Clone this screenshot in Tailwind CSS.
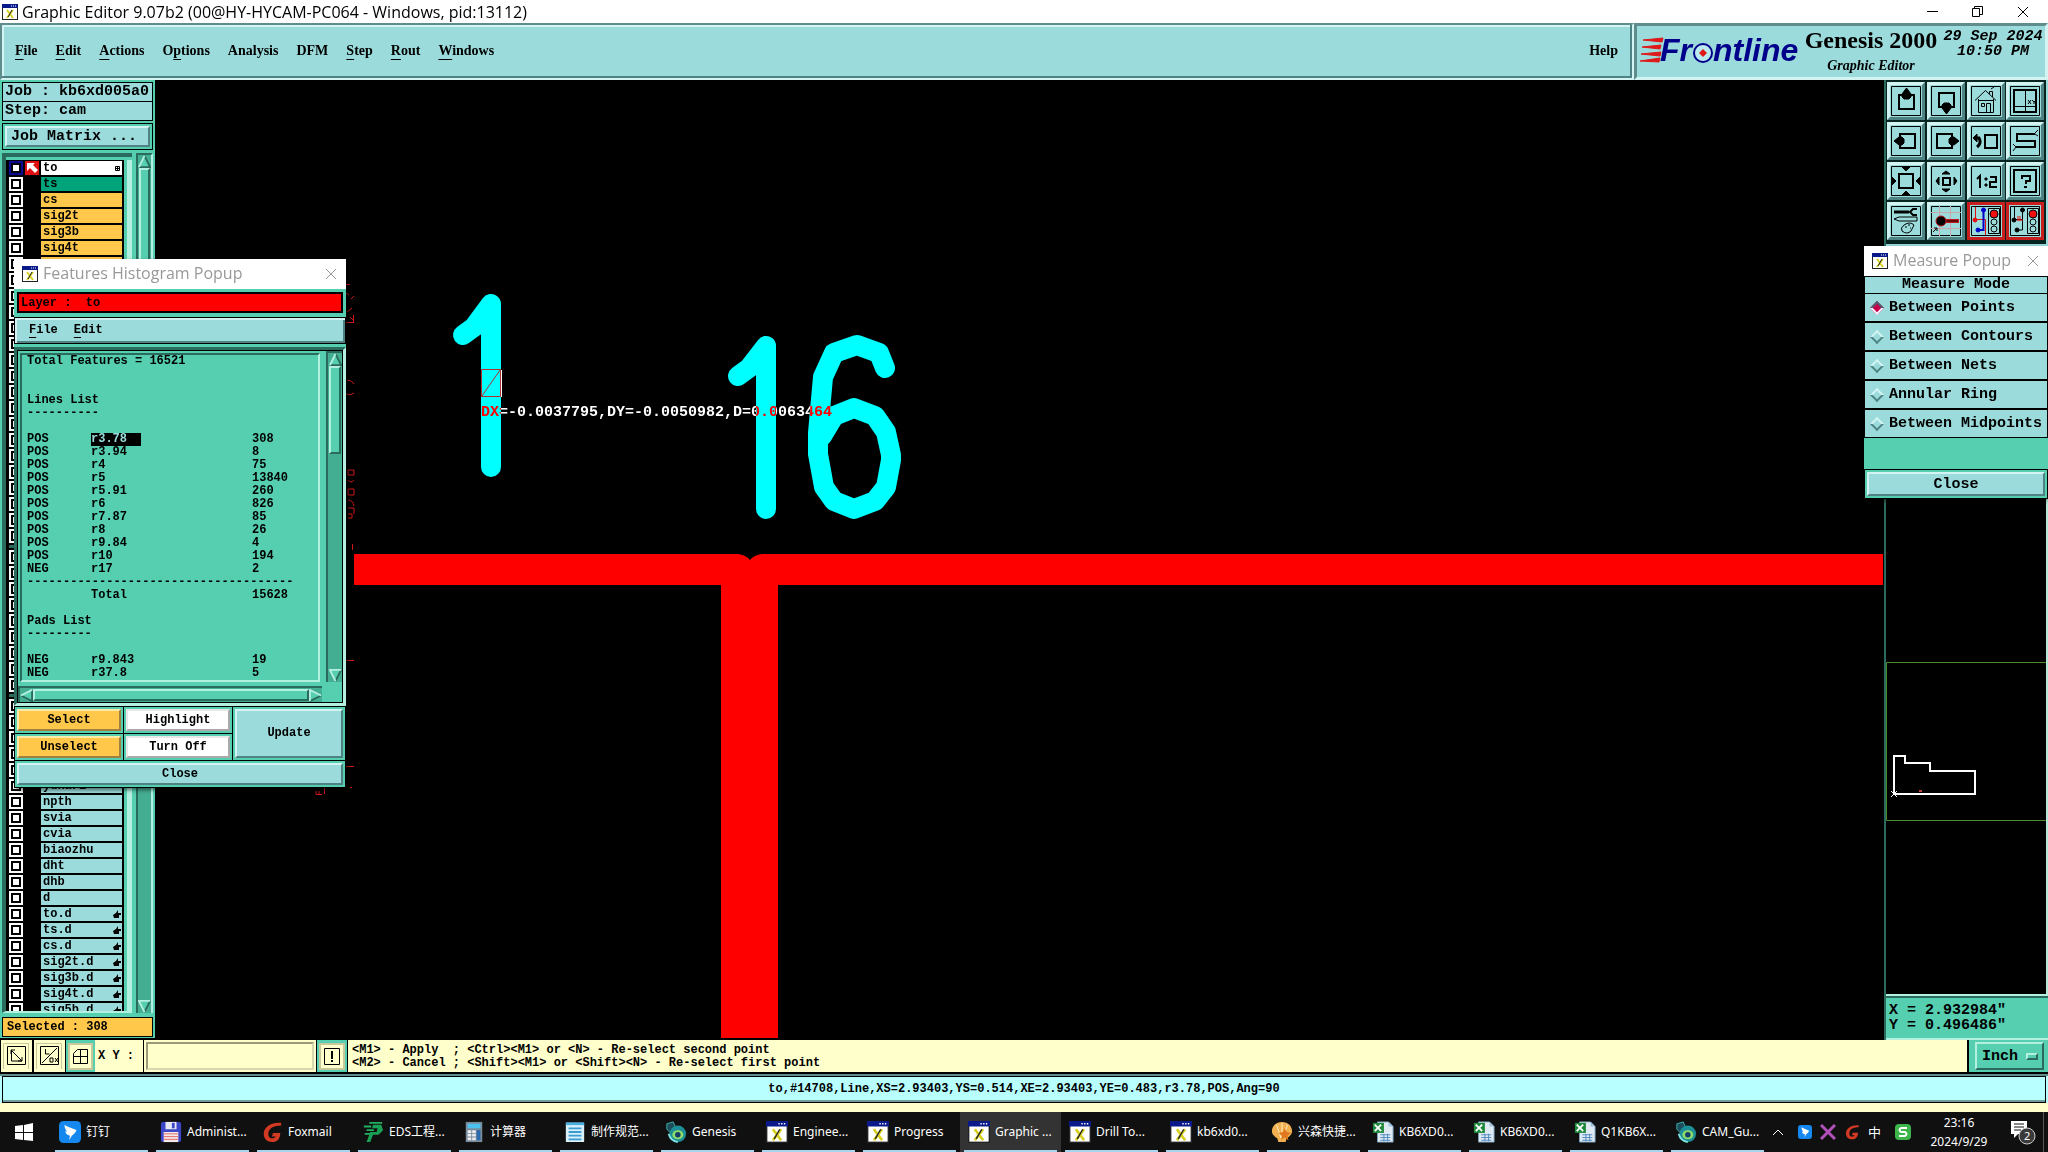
<!DOCTYPE html>
<html lang="en">
<head>
    <meta charset="UTF-8">
    <meta name="viewport" content="width=device-width, initial-scale=1.0">
    <title>Graphic Editor 9.07b2</title>
    <script src="https://cdn.jsdelivr.net/npm/@tailwindcss/browser@4"></script>
</head>
<body class="relative h-screen overflow-hidden flex flex-col bg-black text-black font-bold text-[15px] leading-[15px] font-['Liberation_Mono',monospace]">

    <!-- shared icons -->
    <svg class="hidden">
        <symbol id="i-xwin" viewBox="0 0 16 16">
            <rect x="0.5" y="0.5" width="15" height="15" fill="#fff" stroke="#222" />
            <rect width="16" height="4" fill="#0a1a8a" />
            <path d="M9 2h1M11 2h1M13 2h1" stroke="#fff" />
            <path d="M5 6l6 8M11 6l-6 8" stroke="#d8d020" stroke-width="2" />
            <path d="M10 6l-4 7" stroke="#222" />
        </symbol>
        <symbol id="i-close" viewBox="0 0 12 12"><path d="M1 1l10 10M11 1L1 11" stroke="currentColor" fill="none" /></symbol>
        <symbol id="i-up" viewBox="0 0 14 14"><path d="M7 1L13 13H1z" fill="#55cfb0" /><path d="M7 1l6 12H1" fill="none" stroke="#2b6b5e" stroke-width="2" /><path d="M1 13L7 1" stroke="#b4f0e0" stroke-width="2" /></symbol>
        <symbol id="i-down" viewBox="0 0 14 14"><path d="M1 1h12L7 13z" fill="#55cfb0" /><path d="M13 1L7 13" stroke="#2b6b5e" stroke-width="2" /><path d="M13 1H1l6 12" fill="none" stroke="#b4f0e0" stroke-width="2" /></symbol>
        <symbol id="i-left" viewBox="0 0 14 14"><path d="M13 1v12L1 7z" fill="#55cfb0" /><path d="M13 1v12L1 7" fill="none" stroke="#2b6b5e" stroke-width="2" /><path d="M13 1L1 7" stroke="#b4f0e0" stroke-width="2" /></symbol>
        <symbol id="i-right" viewBox="0 0 14 14"><path d="M1 1v12l12-6z" fill="#55cfb0" /><path d="M1 13l12-6" stroke="#2b6b5e" stroke-width="2" /><path d="M1 13V1l12 6" fill="none" stroke="#b4f0e0" stroke-width="2" /></symbol>
        <symbol id="i-excel" viewBox="0 0 24 24">
            <path d="M6 1h12l5 5v17H6z" fill="#dfeaf2" stroke="#7aa0bd" /><path d="M18 1v5h5" fill="#9fc3dd" />
            <rect x="1" y="2" width="12" height="11" fill="#1f8a3c" /><path d="M3 4l7 7M10 4l-7 7" stroke="#fff" stroke-width="2" />
            <path d="M9 15h11M9 18h11M9 21h11M13 14v8M17 14v8" stroke="#4a86c0" />
        </symbol>
        <symbol id="i-genesis" viewBox="0 0 24 24">
            <path d="M2 3l7-2 3 7-6 5-4-4z" fill="#1d4d5a" stroke="#3fb5b0" />
            <ellipse cx="14" cy="14" rx="9" ry="9" fill="#1d8f96" /><ellipse cx="14" cy="15" rx="6" ry="5" fill="#8fdc6a" /><circle cx="14" cy="15" r="3" fill="#14406b" />
            <path d="M4 14q2 8 10 9" stroke="#7fe3e0" fill="none" stroke-width="2" />
        </symbol>
        <symbol id="i-fox" viewBox="0 0 24 24"><path d="M22 2C12 1 3 6 3 14c0 6 4 9 9 9 6 0 9-4 9-10h-8l-1 4h4c-1 2-3 2-4 2-3 0-4-2-4-5 0-6 6-9 14-9z" fill="#d33a24" /></symbol>
        <symbol id="i-bird" viewBox="0 0 24 24"><rect width="24" height="24" rx="5" fill="#1588f0" /><path d="M6 4c4 3 10 4 13 6-1 3-4 5-5 6l-3 5 1-5c-4-1-5-3-5-5l2 1C7 9 6 7 6 4z" fill="#fff" /></symbol>
    </svg>

    <!-- window title -->
    <header class="h-[23px] shrink-0 bg-white flex items-center pl-[2px] pr-[19px] font-normal font-['Open_Sans','Noto_Sans',sans-serif]">
        <svg class="size-4"><use href="#i-xwin" /></svg>
        <h1 class="ml-1 text-[16px] leading-[20px]">Graphic Editor 9.07b2 (00@HY-HYCAM-PC064 - Windows, pid:13112)</h1>
        <div class="ml-auto flex items-center gap-[34px]">
            <button aria-label="Minimize"><svg class="w-[11px] h-[11px]" stroke="#000"><path d="M0 5.5h11" /></svg></button>
            <button aria-label="Restore"><svg class="w-[11px] h-[11px]" stroke="#000" fill="none"><path d="M0.5 2.5h7v8h-7zM2.5 2.5v-2h8v8h-3" /></svg></button>
            <button aria-label="Close"><svg class="w-3 h-3"><use href="#i-close" /></svg></button>
        </div>
    </header>

    <!-- menu bar -->
    <div class="h-[57px] shrink-0 flex bg-[#9bdbdb]">
        <nav class="flex-1 flex items-center gap-[18px] pl-[13px] pr-[14px] pb-[2px] border-2 border-t-[#5f8c8c] border-l-[#5f8c8c] border-b-[#d4f4f4] border-r-[#d4f4f4] shadow-[inset_-2px_-2px_0_#4f8383,inset_2px_2px_0_#d4f4f4] text-[14px] leading-4 font-['Liberation_Serif',serif]">
            <a href="#"><u class="underline-offset-4">F</u>ile</a>
            <a href="#"><u class="underline-offset-4">E</u>dit</a>
            <a href="#"><u class="underline-offset-4">A</u>ctions</a>
            <a href="#">O<u class="underline-offset-4">p</u>tions</a>
            <a href="#">Analysis</a>
            <a href="#">DFM</a>
            <a href="#"><u class="underline-offset-4">S</u>tep</a>
            <a href="#"><u class="underline-offset-4">R</u>out</a>
            <a href="#"><u class="underline-offset-4">W</u>indows</a>
            <a href="#" class="ml-auto">Help</a>
        </nav>
        <div class="w-[414px] flex border-[3px] border-t-[#5f8c8c] border-l-[#5f8c8c] border-b-[#d4f4f4] border-r-[#d4f4f4]">
            <svg class="w-[164px] h-[50px]" role="img" aria-label="Frontline">
                <path d="M6 14l20-2-1 4zM5 21l19-2-1 4zM4 28l20-2-1 4zM3 35l20-3-1 4z" fill="#e01818" stroke="#e01818" />
                <g fill="#00008a" font-family="Liberation Sans" font-size="32" font-weight="bold" font-style="italic">
                    <text x="23" y="35">Fr</text>
                    <text x="76" y="35">ntline</text>
                </g>
                <circle cx="66" cy="27" r="9" fill="#b9eaf0" stroke="#00008a" stroke-width="2" />
                <path d="M66 23l4 4-4 4-4-4z" fill="#e01818" />
            </svg>
            <div class="w-[140px] text-center font-['Liberation_Serif',serif]">
                <div class="text-[24px] leading-7 whitespace-nowrap">Genesis 2000</div>
                <div class="text-[14px] leading-6 italic">Graphic Editor</div>
            </div>
            <div class="flex-1 pt-[3px] text-center italic whitespace-nowrap">29 Sep 2024<br>10:50 PM</div>
        </div>
    </div>

    <main class="flex-1 min-h-0 flex">
        <!-- layers -->
        <aside class="w-[155px] shrink-0 flex flex-col bg-[#55cfb0] pt-[2px] px-[2px] pb-[1px] border-b-2 border-black">
            <div class="h-5 border border-black bg-[#9bdbdb] px-[2px] leading-[18px] whitespace-nowrap">Job : kb6xd005a0</div>
            <div class="h-[19px] border border-black border-t-0 bg-[#9bdbdb] px-[2px] leading-[18px]">Step: cam</div>
            <div class="mt-[2px] p-[2px] border border-black">
                <button class="block w-full h-[21px] text-left px-1 leading-4 bg-[#9bdbdb] border-2 border-t-[#d4f4f4] border-l-[#d4f4f4] border-b-[#4f8383] border-r-[#4f8383]">Job Matrix ...</button>
            </div>
            <div class="mt-[3px] flex-1 min-h-0 flex">
                <div class="flex-1 min-w-0 flex border-t-4 border-l-4 border-t-[#2b6b5e] border-l-[#2b6b5e] border-b-2 border-b-[#b4f0e0] pt-[3px]">
                    <ul id="layers" class="w-[118px] h-full overflow-hidden bg-black text-[12px] leading-[14px] pl-[3px]"></ul>
                    <div class="flex-1 border-r-[5px] border-[#b4f0e0]"></div>
                </div>
                <div class="w-[17px] ml-1 flex flex-col items-center bg-[#44ae92] border-l-2 border-t-2 border-r-2 border-l-[#2b6b5e] border-t-[#2b6b5e] border-r-[#b4f0e0]">
                    <svg class="size-[13px] shrink-0"><use href="#i-up" /></svg>
                    <div class="w-[11px] h-1/2 bg-[#55cfb0] border-2 border-t-[#b4f0e0] border-l-[#b4f0e0] border-b-[#2b6b5e] border-r-[#2b6b5e]"></div>
                    <svg class="size-[13px] shrink-0 mt-auto"><use href="#i-down" /></svg>
                </div>
            </div>
            <div class="mt-1 h-5 border border-black bg-[#ffc84b] px-1 text-[12px] leading-[18px]">Selected : 308</div>
        </aside>

        <!-- drawing area, drawn in window coordinates -->
        <div class="flex-1 min-w-0 overflow-hidden">
            <svg class="w-full h-full">
                <g transform="translate(-155 -80)">
                    <path d="M354 554H738Q746 555 750 560Q754 555 762 554H1883V585H778V1038H721V585H354z" fill="#f00" />
                    <g fill="none" stroke="#0ff" stroke-width="20" stroke-linecap="round" stroke-linejoin="round">
                        <path d="M463 335L474 327L491 304V467" />
                        <path d="M738 376L749 368L766 346V509" />
                        <path d="M885 368L879 353L857 345L834 353L823 377L818 433V454L824 487L834 501L854 509L875 501L886 487L891 460V455L886 432L875 416L854 408L834 416L822 436" />
                    </g>
                    <path d="M481.500 369.500h19v27h-19zM481.500 396.500l19-27" fill="none" stroke="#b03030" />
                    <path d="M501.500 370v27" stroke="#fff" />
                    <text class="mix-blend-difference" x="481" y="416" fill="#fff" font-family="Liberation Mono" font-size="15" font-weight="bold">DX=-0.0037795,DY=-0.0050982,D=0.0063464</text>
                    <g stroke="#d01818" fill="none">
                        <path d="M346 284.500h4M346 293l3 2M351 299l3-3M347 312l5-4M346 322.500h8M353.500 315v7M350 317l3 3M347 380q5 0 7 4M346 394q4 2 8-1M348 470h6v5h-6zM348 480q3 4 6 0M348 489h6v6h-6zM348 500q5 0 6 6M348 508h6v6M348 514h4v4h-4M352.500 544v6M346 660.500h8M346 766.500h8M330 787.500h4M338 787.500h3M350 787.500h2M324.500 786v8M316 794.500h6M316 791v3M319 791v3" />
                    </g>
                </g>
            </svg>
        </div>

        <!-- tools and overview -->
        <aside class="w-[164px] shrink-0 flex flex-col border-l-2 border-[#2b6b5e]">
            <div id="tools" class="grid grid-cols-4 gap-[2px] pt-[2px] pl-[1px] pr-[2px] pb-1 border-b-2 border-b-[#9bdbdb] border-r-2 border-r-[#9bdbdb] bg-[#062420]">
            </div>
            <div class="flex-1 border-r-2 border-[#b4e8d8]">
                <svg class="w-full h-full">
                    <g transform="translate(-1886 -246)" fill="none">
                        <path d="M2046 662.500H1886.500V820.500H2046" stroke="#4c8a2c" />
                        <path d="M1894 794V756H1905V763H1930V771H1975V794z" stroke="#fff" stroke-width="2" />
                        <path d="M1891 791l6 6M1897 791l-6 6" stroke="#fff" />
                        <path d="M1919 790h3v2h-3z" fill="#c04040" />
                    </g>
                </svg>
            </div>
            <div class="h-[46px] border-y-2 border-y-[#b4f0e0] bg-[#55cfb0]">
                <div class="h-full border-t-2 border-t-[#2b6b5e] pt-[5px] pl-[3px] whitespace-pre">X = 2.932984"
Y = 0.496486"</div>
            </div>
        </aside>
    </main>

    <!-- command bar -->
    <div class="h-[34px] shrink-0 flex border-b-2 border-black bg-black text-[12px]">
        <button aria-label="Snap" class="w-[31px] ml-[1px] mr-[2px] p-[2px] bg-[#ffffcc]"><svg class="size-[26px]" fill="none" stroke="#000"><path d="M0.500 0.500h25v26h-25z" stroke="#c8c89a" /><path d="M4.500 3.500h18v18h-18zM8.500 8v10H19M8 7l11 11M8 11V7h4M19 14v4h-4" /></svg></button>
        <button aria-label="Angle" class="w-[31px] mr-[1px] p-[2px] bg-[#ffffcc]"><svg class="size-[26px]" fill="none" stroke="#000"><path d="M0.500 0.500h25v26h-25z" stroke="#c8c89a" /><path d="M4.500 3.500h18v18h-18zM6 20L21 5M9.500 6v5h4M14 15h3v4h-3zM19 15l3 4M22 15l-3 4" /></svg></button>
        <button aria-label="Grid" class="w-[29px] p-[2px] bg-[#55cfb0]"><svg class="w-[25px] h-[27px] bg-[#ffffcc]" fill="none" stroke="#000"><path d="M1 1h23v25H1z" stroke="#c8c89a" stroke-width="2" /><path d="M9.500 6.500h10v14h-14v-10zM12.500 6v14M5 13.500h15" /></svg></button>
        <div class="flex-1 flex bg-[#ffffcc]">
            <label for="xy" class="w-[48px] pl-[3px] leading-[32px] whitespace-nowrap">X Y :</label>
            <div class="w-[174px] p-[2px] border-x border-black">
                <input id="xy" type="text" class="block w-full h-[28px] bg-[#ffffcc] border-2 border-t-[#9a9a78] border-l-[#9a9a78] border-b-[#d8d8b0] border-r-[#d8d8b0] px-1 outline-none" value="">
            </div>
            <button aria-label="Alert" class="w-[31px] p-[2px] bg-[#55cfb0] border-r border-black"><svg class="w-[26px] h-[27px] bg-[#ffffcc]" fill="none" stroke="#000"><path d="M1 1h24v25H1z" stroke="#c8c89a" stroke-width="2" /><path d="M5.500 5.500h15v16h-15z" /><path d="M13 8v8M13 17v2" stroke-width="2" /></svg></button>
            <div class="pl-1 leading-[13px] pt-1 whitespace-pre">&lt;M1> - Apply  ; &lt;Ctrl>&lt;M1> or &lt;N> - Re-select second point
&lt;M2> - Cancel ; &lt;Shift>&lt;M1> or &lt;Shift>&lt;N> - Re-select first point</div>
        </div>
        <div class="w-[79px] ml-[2px] py-[2px] pl-[6px] pr-1 bg-[#55cfb0]">
            <button class="w-full h-[28px] pl-[5px] flex items-center gap-2 text-[15px] border-2 border-t-[#b4f0e0] border-l-[#b4f0e0] border-b-[#2b6b5e] border-r-[#2b6b5e]">Inch
                <span class="w-3 h-[7px] border-2 border-t-[#b4f0e0] border-l-[#b4f0e0] border-b-[#2b6b5e] border-r-[#2b6b5e]"></span>
            </button>
        </div>
    </div>

    <!-- status line -->
    <div class="h-[29px] shrink-0 border-t-2 border-t-[#5f8c8c] bg-[#b8ffff] px-[2px]">
        <div class="h-[27px] border border-black text-center text-[12px] leading-[25px] shadow-[inset_0_-2px_0_#6f9c9c]">to,#14708,Line,XS=2.93403,YS=0.514,XE=2.93403,YE=0.483,r3.78,POS,Ang=90</div>
    </div>
    <div class="h-[9px] shrink-0 bg-[#ffffcc]"></div>

    <!-- taskbar -->
    <footer class="h-10 shrink-0 flex items-stretch bg-[#101010] text-white font-normal text-[12px] leading-4 font-['Noto_Sans','Noto_Sans_CJK_SC',sans-serif] whitespace-nowrap">
        <button aria-label="Start" class="w-[55px] pl-[15px]"><svg class="w-[18px] h-[18px]" fill="#fff"><path d="M0 3l8-1v7H0zM9 2l9-2v9H9zM0 10h8v7l-8-1zM9 10h9v8l-9-1z" /></svg></button>
        <div id="tasks" class="flex gap-2"></div>
        <div class="ml-auto flex items-center">
            <svg class="w-3 h-3 mr-[14px]" fill="none" stroke="#fff"><path d="M1 9l5-5 5 5" /></svg>
            <svg class="size-[14px] mr-2"><use href="#i-bird" /></svg>
            <svg class="size-4 mr-2"><path d="M1 1l14 14M15 1L1 15" stroke="#b050b8" stroke-width="3" /></svg>
            <svg class="size-4 mr-2"><use href="#i-fox" /></svg>
            <span class="w-[26px] text-[13px]">中</span>
            <svg class="size-[18px]"><rect x="1" y="1" width="16" height="16" rx="4" fill="#3db54a" /><path d="M13 5H7q-3 2 0 4h4q3 2 0 4H5" stroke="#fff" stroke-width="2" fill="none" /></svg>
            <div class="w-[94px] text-center leading-[19px]">23:16<br>2024/9/29</div>
            <svg class="w-[26px] h-[28px] ml-1 mr-[7px]"><path d="M1 3h16v13H8l-4 4v-4H1z" fill="#fff" /><path d="M4 6h10M4 9h10M4 12h7" stroke="#101010" /><circle cx="17" cy="18" r="8" fill="#3a3a3a" stroke="#ccc" /><text x="14" y="22" fill="#fff" font-size="11">2</text></svg>
            <div class="w-[5px] h-full border-l border-[#555]"></div>
        </div>
    </footer>

    <!-- features histogram -->
    <section class="absolute left-[14px] top-[259px] w-[332px] bg-[#55cfb0] text-[12px] leading-[13px] shadow-[2px_2px_4px_#0008]">
        <header class="h-[30px] bg-white flex items-center pl-2 pr-[9px] text-[#999] font-normal font-['Open_Sans','Noto_Sans',sans-serif]">
            <svg class="size-4"><use href="#i-xwin" /></svg>
            <h2 class="ml-[5px] text-[16px] leading-5 pb-[2px]">Features Histogram Popup</h2>
            <button aria-label="Close popup" class="ml-auto"><svg class="size-3"><use href="#i-close" /></svg></button>
        </header>
        <div class="mx-[3px] mt-[3px] h-[21px] border-2 border-black bg-[#f00] px-[2px] leading-[18px] whitespace-pre">Layer :  to</div>
        <nav class="mt-1 h-[27px] flex items-center gap-4 px-[14px] bg-[#9bdbdb] border border-black shadow-[inset_2px_2px_0_#d4f4f4,inset_-2px_-2px_0_#4f8383]">
            <a href="#"><u class="underline-offset-4">F</u>ile</a>
            <a href="#"><u class="underline-offset-4">E</u>dit</a>
        </nav>
        <div class="mt-[3px] h-[359px] border-[3px] border-t-[#2b6b5e] border-l-[#2b6b5e] border-b-[#b4f0e0] border-r-[#b4f0e0]">
            <div class="h-full border border-black grid grid-cols-[1fr_16px] grid-rows-[1fr_16px] gap-x-1 gap-y-1">
                <div class="m-[2px] mb-0 border-2 border-t-[#2b6b5e] border-l-[#2b6b5e] border-b-[#b4f0e0] border-r-[#b4f0e0] pl-[5px] overflow-hidden whitespace-pre">Total Features = 16521


Lines List
----------

<table id="lines" class="border-collapse"></table>-------------------------------------
<table id="total" class="border-collapse"></table>
Pads List
---------

<table id="pads" class="border-collapse"></table></div>
                <div class="flex flex-col items-center bg-[#44ae92] border-t-2 border-l-2 border-[#2b6b5e]">
                    <svg class="size-[13px] shrink-0"><use href="#i-up" /></svg>
                    <div class="w-3 h-[88px] bg-[#55cfb0] border-2 border-t-[#b4f0e0] border-l-[#b4f0e0] border-b-[#2b6b5e] border-r-[#2b6b5e]"></div>
                    <svg class="size-[13px] shrink-0 mt-auto"><use href="#i-down" /></svg>
                </div>
                <div class="flex items-center bg-[#44ae92] border-t-2 border-l-2 border-[#2b6b5e]">
                    <svg class="size-[13px] shrink-0"><use href="#i-left" /></svg>
                    <div class="flex-1 h-3 bg-[#55cfb0] border-2 border-t-[#b4f0e0] border-l-[#b4f0e0] border-b-[#2b6b5e] border-r-[#2b6b5e]"></div>
                    <svg class="size-[13px] shrink-0"><use href="#i-right" /></svg>
                </div>
            </div>
        </div>
        <div class="grid grid-cols-[108px_108px_1fr] gap-[1px] bg-black p-[1px]">
            <div class="p-[2px] bg-[#55cfb0]"><button class="block w-full h-[22px] bg-[#ffc84b] border-2 border-t-[#ffe9a8] border-l-[#ffe9a8] border-b-[#a08040] border-r-[#a08040]">Select</button></div>
            <div class="p-[2px] bg-[#55cfb0]"><button class="block w-full h-[22px] bg-white border-2 border-t-[#e8e8e8] border-l-[#e8e8e8] border-b-[#aaa] border-r-[#aaa]">Highlight</button></div>
            <div class="p-[2px] bg-[#55cfb0] row-span-2"><button class="block w-full h-full bg-[#9bdbdb] border-2 border-t-[#d4f4f4] border-l-[#d4f4f4] border-b-[#4f8383] border-r-[#4f8383]">Update</button></div>
            <div class="p-[2px] bg-[#55cfb0]"><button class="block w-full h-[22px] bg-[#ffc84b] border-2 border-t-[#ffe9a8] border-l-[#ffe9a8] border-b-[#a08040] border-r-[#a08040]">Unselect</button></div>
            <div class="p-[2px] bg-[#55cfb0]"><button class="block w-full h-[22px] bg-white border-2 border-t-[#e8e8e8] border-l-[#e8e8e8] border-b-[#aaa] border-r-[#aaa]">Turn Off</button></div>
            <div class="p-[2px] bg-[#55cfb0] col-span-3"><button class="block w-full h-[22px] bg-[#9bdbdb] border-2 border-t-[#d4f4f4] border-l-[#d4f4f4] border-b-[#4f8383] border-r-[#4f8383]">Close</button></div>
        </div>
    </section>

    <!-- measure popup -->
    <section class="absolute right-0 top-[246px] w-[184px] bg-[#55cfb0] shadow-[-1px_2px_4px_#0008]">
        <header class="h-[30px] bg-white flex items-center pl-2 pr-[9px] text-[#999] font-normal font-['Open_Sans','Noto_Sans',sans-serif]">
            <svg class="size-4"><use href="#i-xwin" /></svg>
            <h2 class="ml-[5px] text-[16px] leading-5 pb-[2px]">Measure Popup</h2>
            <button aria-label="Close popup" class="ml-auto"><svg class="size-3"><use href="#i-close" /></svg></button>
        </header>
        <fieldset class="bg-black px-[1px]">
            <div class="h-[16px] mt-[1px] bg-[#9bdbdb] text-center leading-4">Measure Mode</div>
            <div id="modes" class="flex flex-col gap-[2px] pt-[1px] pb-[1px]"></div>
        </fieldset>
        <div class="mt-[31px] border border-black p-[2px]">
            <button class="block w-full h-6 bg-[#9bdbdb] border-2 border-t-[#d4f4f4] border-l-[#d4f4f4] border-b-[#4f8383] border-r-[#4f8383]">Close</button>
        </div>
    </section>

    <script>
        const el = (id) => document.getElementById(id);

        // layer list in three blocks; unnamed slots only have a tick box
        const blank = (n) => Array(n).fill('');
        const groups = [
            ['to', 'ts', 'cs', 'sig2t', 'sig3b', 'sig4t', ...blank(18)],
            blank(9),
            [...blank(5), 'yukari', 'npth', 'svia', 'cvia', 'biaozhu', 'dht', 'dhb', 'd', 'to.d', 'ts.d', 'cs.d', 'sig2t.d', 'sig3b.d', 'sig4t.d', 'sig5b.d'],
        ];
        const hand = '<svg class="w-2 h-[14px] ml-auto mr-[1px]"><path d="M0 8l3-2 2-3v3h3v2H6v3H1z" /></svg>';
        const grid = '<svg class="w-[7px] h-[14px] ml-auto"><path d="M0.5 5.5h4v4h-4zM2.5 5v5M0 7.500h5" fill="none" stroke="#000" /></svg>';
        el('layers').innerHTML = groups.map((names, g) => names.map((name, i) => {
            const first = g === 0 && i === 0;
            const bg = first ? 'bg-white' : name === 'ts' ? 'bg-[#00a37a]' : g === 0 ? 'bg-[#ffc84b]' : 'bg-[#9bdbdb]';
            return `<li class="h-4 flex items-center">
                <span class="size-[14px] p-[2px] ${first ? 'bg-[#0a0a9a]' : 'bg-white'}"><span class="block size-[10px] bg-white border-2 border-black"></span></span>
                ${first ? '<svg class="w-[14px] h-[14px] ml-[2px] mr-[2px] bg-[#e01010]"><path d="M2 2h8L8 4l5 5-3 3-5-5-3 3z" fill="#fff" /></svg>' : '<span class="w-[18px]"></span>'}
                <span class="flex w-[81px] h-[14px] pl-[2px] ${bg}">${name}${first ? grid : name.endsWith('.d') ? hand : ''}</span>
            </li>`;
        }).join('')).join('<li class="h-[5px] bg-[#2b6b5e] border-y border-black"></li>');

        // histogram rows
        const row = ([a, b, c], sel) => `<tr><td class="w-[64px] p-0">${a}</td><td class="w-[161px] p-0">${sel ? `<span class="block w-[50px] h-[13px] bg-black text-[#9bdbdb]">${b}</span>` : b}</td><td class="p-0">${c}</td></tr>`;
        el('lines').innerHTML = [
            ['POS', 'r3.78', 308], ['POS', 'r3.94', 8], ['POS', 'r4', 75], ['POS', 'r5', 13840], ['POS', 'r5.91', 260], ['POS', 'r6', 826],
            ['POS', 'r7.87', 85], ['POS', 'r8', 26], ['POS', 'r9.84', 4], ['POS', 'r10', 194], ['NEG', 'r17', 2],
        ].map((r, i) => row(r, i === 0)).join('');
        el('total').innerHTML = row(['', 'Total', 15628]);
        el('pads').innerHTML = [['NEG', 'r9.843', 19], ['NEG', 'r37.8', 5]].map((r) => row(r)).join('');

        // measure modes
        el('modes').innerHTML = ['Between Points', 'Between Contours', 'Between Nets', 'Annular Ring', 'Between Midpoints'].map((m, i) => `
            <label class="h-[27px] flex items-center gap-[7px] pl-[7px] bg-[#9bdbdb] whitespace-nowrap">
                <input type="radio" name="mode" ${i === 0 ? 'checked' : ''} class="appearance-none size-[10px] shrink-0 rotate-45 border-2 border-t-[#d4f4f4] border-l-[#d4f4f4] border-b-[#4f8383] border-r-[#4f8383] checked:bg-[#c8004c] checked:border-t-[#4f5f6f] checked:border-l-[#4f5f6f] checked:border-b-[#f4f4ff] checked:border-r-[#f4f4ff]">${m}
            </label>`).join('');

        // toolbar icons, each on a 30 x 30 grid
        const tools = [
            ['Pan up', '<path d="M8 9h15v14H8z" stroke-width="2"/><path d="M15.500 2L11 8v3l2 2h5l2-2V8z" fill="#000"/>'],
            ['Pan down', '<path d="M8 7h15v14H8z" stroke-width="2"/><path d="M15.500 28L11 22v-3l2-2h5l2 2v3z" fill="#000"/>'],
            ['Home', '<path d="M4 14.500L14.500 4.500L25 14.500M7.500 13v13.500h15V13M7 14.500h15M18.500 8V5.500h3V11M20 3l3-2M10.500 17.500h3v3h-3zM15.500 26v-8.500h4V26"/>'],
            ['Coordinates', '<path d="M4 4h22v22H4z" stroke-width="2"/><path d="M15.500 4v22M4 20.500h22M18 14l3 4M21 14l-3 4M22 14l2 2 2-2M24 16v2"/>'],
            ['Pan left', '<path d="M9 8h15v14H9z" stroke-width="2"/><path d="M3 15l5-4h3l2 2v4l-2 2H8z" fill="#000"/>'],
            ['Pan right', '<path d="M6 8h15v14H6z" stroke-width="2"/><path d="M28 15l-5-4h-3l-2 2v4l2 2h3z" fill="#000"/>'],
            ['Previous view', '<path d="M14 9h12v13H14z" stroke-width="2"/><path d="M5 12h3q3 5-2 9" stroke-width="3"/><path d="M2 12l4-4v8z" fill="#000"/>'],
            ['Snake', '<path d="M25 8H7v7h18v6H6" stroke-width="2"/><path d="M24 8l4-4M25 8l3 2M6 21l-3-3M6 21l-3 4"/>'],
            ['Zoom in', '<path d="M8 8h14v14H8z" stroke-width="2"/><path d="M11 1h8l-4 4zM11 29h8l-4-4zM1 11v8l4-4zM29 11v8l-4-4z" fill="#000"/>'],
            ['Zoom out', '<path d="M12 12h7v7h-7z" stroke-width="2"/><path d="M11 8h8l-4-3zM11 23h8l-4 3zM8 11v8l-3-4zM23 11v8l3-4z" fill="#000"/>'],
            ['Scale', '<path d="M6 13l3-3v12M19 11h6v5h-6v5h7" stroke-width="2"/><path d="M14 12h2v2h-2zM14 18h2v2h-2z" fill="#000"/>'],
            ['Query', '<path d="M4 4h22v22H4z" stroke-width="2"/><path d="M12 13v-3h8v5h-4v3M14 21h3" stroke-width="2"/>'],
            ['Options', '<path d="M3 6h15" stroke-width="3"/><path d="M26 3h-4l-3 3 3 3h4" stroke-width="2"/><path d="M3 13l5-2h18v4H8zM11 25q-2-3 2-6 6-4 10 0l-3 6q-4 4-9 0zM14 21h2M17 19h2M19 22h1"/>'],
            ['Select feature', '<path d="M8.500 0v30M19.500 0v30M0 6.500h30M0 22.500h30" stroke="#c8a8a8"/><path d="M14 15h14" stroke="#c01818" stroke-width="4"/><path d="M14 15h13"/><circle cx="10" cy="15" r="5" fill="#000" stroke="#c01818"/><path d="M2 26l4-4M3 22h3v3"/>'],
            ['Nets', '<path d="M4.500 1v12.500h10V29" stroke="#e01010"/><path d="M12.500 4v20H7" stroke="#00c" stroke-width="2"/><circle cx="4" cy="14" r="2" fill="#e01010" stroke="#e01010"/><circle cx="12.500" cy="4" r="2" fill="#00c" stroke="#00c"/><circle cx="7" cy="24" r="2" fill="#00c" stroke="#00c"/><path d="M17.500 2.500h11v25h-11z"/><circle cx="23" cy="8" r="4" fill="#f01010"/><circle cx="23" cy="16" r="3"/><circle cx="23" cy="23" r="3"/>', true],
            ['Net check', '<path d="M4.500 1v12.500M12.500 4v20H7M5 13.500h8" /><path d="M7 14h6M8 10v5M10 10v5" stroke="#e01010"/><circle cx="4" cy="14" r="2" fill="#000"/><circle cx="12.500" cy="4" r="2" fill="#000"/><circle cx="7" cy="24" r="2" fill="#000"/><path d="M17.500 2.500h11v25h-11z"/><circle cx="23" cy="8" r="4" fill="#f01010"/><circle cx="23" cy="16" r="3"/><circle cx="23" cy="23" r="3"/>', true],
        ];
        el('tools').innerHTML = tools.map(([name, art, on]) => `
            <button aria-label="${name}" class="w-[38px] h-[38px] p-[1px] bg-[#9bdbdb] border-[3px] ${on ? 'border-[#c81e1e]' : 'border-t-[#d4f4f4] border-l-[#d4f4f4] border-b-[#4f8383] border-r-[#4f8383]'}">
                <svg class="w-[30px] h-[30px]" fill="none" stroke="#000"><path d="M0.5 0.5h29v29h-29z" />${art}</svg>
            </button>`).join('');

        // taskbar buttons
        const use = (id) => `<use href="#${id}" />`;
        const disk = '<rect x="1" y="1" width="22" height="22" rx="2" fill="#3a48c8"/><path d="M6 1h12v8H6z" fill="#e8e8f4"/><path d="M13 2h3v6h-3z" fill="#3a48c8"/><path d="M4 12h16v11H4z" fill="#f4e8e8"/><path d="M4 14h16M4 17h16M4 20h16" stroke="#e06060"/>';
        const eds = '<path d="M8 2h14M2 6h8M5 10h8M3 14h8" stroke="#22b060" stroke-width="2"/><path d="M12 4h9l2 6-5 5h-6l-3 8H5l4-11h7l1-4h-6z" fill="#18a055"/>';
        const calc = '<rect x="3" y="1" width="18" height="22" fill="#7a8a98"/><path d="M5 3h14v5H5z" fill="#4cc2f0"/><path d="M5 10h4v3H5zM10 10h4v3h-4zM5 14h4v3H5zM10 14h4v3h-4zM5 18h4v3H5zM10 18h4v3h-4z" fill="#e8eef2"/><path d="M15 10h4v11h-4z" fill="#2a6ab0"/>';
        const note = '<rect x="2" y="2" width="20" height="21" rx="1" fill="#d8f0fa"/><path d="M2 3h20" stroke="#4ab0e0" stroke-width="3"/><path d="M5 8h14M5 12h14M5 16h14M5 20h14" stroke="#3a9cd0" stroke-width="2"/>';
        const shell = '<path d="M12 1c7 0 11 5 11 10 0 4-3 6-6 8l-1 4H8l-1-4c-3-2-6-4-6-8C1 6 5 1 12 1z" fill="#f0b050"/><path d="M12 2v17M6 4l5 15M18 4l-5 15" stroke="#fff0c8"/><path d="M15 8l2 4 5 1-4 3 1 5-4-3-4 3 1-5-4-3 5-1z" fill="#e07820"/>';
        const tasks = [
            ['钉钉', use('i-bird')], ['Administ...', disk], ['Foxmail', use('i-fox')], ['EDS工程...', eds], ['计算器', calc], ['制作规范...', note],
            ['Genesis', use('i-genesis')], ['Enginee...', use('i-xwin')], ['Progress', use('i-xwin')], ['Graphic ...', use('i-xwin'), true],
            ['Drill To...', use('i-xwin')], ['kb6xd0...', use('i-xwin')], ['兴森快捷...', shell], ['KB6XD0...', use('i-excel')], ['KB6XD0...', use('i-excel')],
            ['Q1KB6X...', use('i-excel')], ['CAM_Gu...', use('i-genesis')],
        ];
        el('tasks').innerHTML = tasks.map(([name, art, on]) => `
            <button class="w-[93px] flex items-center gap-[5px] pl-1 pt-[2px] border-b-2 border-[#a5d4ec] ${on ? 'bg-[#333] shadow-[-4px_0_0_#333,4px_0_0_#333]' : ''}">
                <svg class="size-[22px] shrink-0" viewBox="0 0 24 24">${art}</svg><span>${name}</span>
            </button>`).join('');
    </script>
</body>
</html>
